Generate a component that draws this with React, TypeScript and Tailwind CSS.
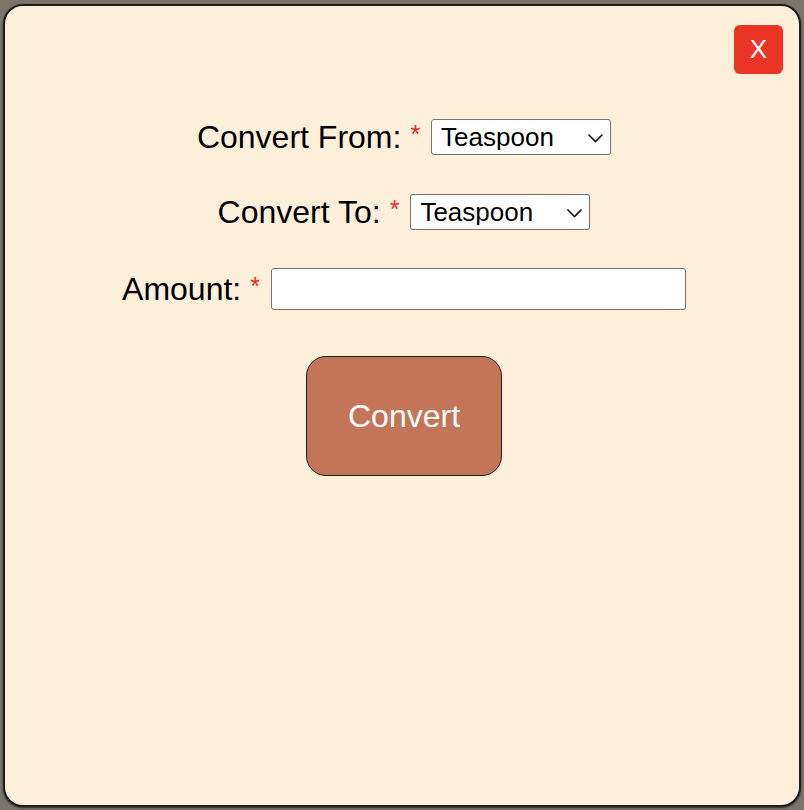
import { useState } from 'react';

const units = ['Teaspoon', 'Tablespoon', 'Cup', 'Milliliter', 'Liter', 'Ounce'];

function Required() {
    return <span className="text-[#e8291c] text-[25px] ml-[9px] mr-[11px] relative -top-[2px]">*</span>;
}

function UnitSelect({ value, onChange }: { value: string; onChange: (v: string) => void }) {
    return (
        <div className="relative flex">
            <select
                value={value}
                onChange={(e) => onChange(e.target.value)}
                className="appearance-none w-[180px] h-[36px] bg-white border border-[#767676] rounded-[3px] text-[26px] leading-none text-black pl-[9px] pr-[28px]"
            >
                {units.map((u) => (
                    <option key={u} value={u}>{u}</option>
                ))}
            </select>
            <svg className="absolute right-[7px] top-[14px] pointer-events-none" width="17" height="10" viewBox="0 0 17 10">
                <path d="M1.5 1.5 L8.5 8.5 L15.5 1.5" fill="none" stroke="#111" strokeWidth="1.6" />
            </svg>
        </div>
    );
}

export default function App() {
    const [from, setFrom] = useState('Teaspoon');
    const [to, setTo] = useState('Teaspoon');
    const [amount, setAmount] = useState('');

    return (
        <div className="w-[804px] h-[810px] bg-[#7b7569] pt-[4px] pl-[3px] font-['Liberation_Sans',Arial,sans-serif]">
            <div className="relative w-[798px] h-[803px] bg-[#feefda] border-2 border-[#1e1e1e] rounded-[20px] shadow-[0_1px_2px_rgba(0,0,0,0.6)]">
                <button className="absolute top-[19px] right-[16px] w-[49px] h-[49px] rounded-[6px] bg-[#ec3424] text-white text-[26px] flex items-center justify-center">
                    X
                </button>

                <div className="flex flex-col items-center pt-[110px] pl-[4px] text-[32px] text-black">
                    <div className="h-[42px] flex items-center">
                        <span>Convert From:</span>
                        <Required />
                        <UnitSelect value={from} onChange={setFrom} />
                    </div>

                    <div className="h-[42px] mt-[33px] flex items-center">
                        <span>Convert To:</span>
                        <Required />
                        <UnitSelect value={to} onChange={setTo} />
                    </div>

                    <div className="h-[42px] mt-[35px] flex items-center">
                        <span>Amount:</span>
                        <Required />
                        <input
                            type="number"
                            value={amount}
                            onChange={(e) => setAmount(e.target.value)}
                            className="w-[415px] h-[42px] bg-white border border-[#767676] rounded-[3px] px-2 text-[24px]"
                        />
                    </div>

                    <button className="mt-[46px] w-[196px] h-[120px] rounded-[20px] bg-[#c47557] border-[1.5px] border-[#1e1e1e] text-white text-[32px]">
                        Convert
                    </button>
                </div>
            </div>
        </div>
    );
}
